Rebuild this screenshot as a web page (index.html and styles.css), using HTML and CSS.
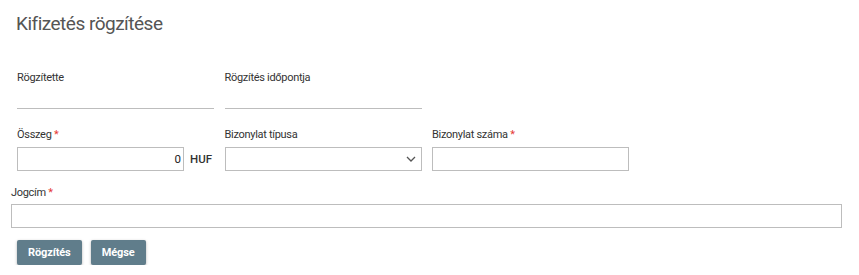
FILE: index.html
```html
<!DOCTYPE html>
<html lang="hu">
<head>
<meta charset="utf-8">
<title>Kifizetés rögzítése</title>
<link rel="stylesheet" href="styles.css">
</head>
<body>
<div class="page">
  <h1 class="title">Kifizetés rögzítése</h1>

  <div class="row row-info">
    <div class="field">
      <div class="label">Rögzítette</div>
      <div class="display"></div>
    </div>
    <div class="field">
      <div class="label">Rögzítés időpontja</div>
      <div class="display"></div>
    </div>
  </div>

  <div class="row row-inputs">
    <div class="field">
      <div class="label">Összeg <span class="req">*</span></div>
      <div class="amount">
        <div class="input amount-input">0</div>
        <span class="currency">HUF</span>
      </div>
    </div>
    <div class="field">
      <div class="label">Bizonylat típusa</div>
      <div class="input select">
        <svg class="chevron" width="10" height="6" viewBox="0 0 10 6"><path d="M1 1 L5 5 L9 1" fill="none" stroke="#555" stroke-width="1.3"/></svg>
      </div>
    </div>
    <div class="field">
      <div class="label">Bizonylat száma <span class="req">*</span></div>
      <div class="input"></div>
    </div>
  </div>

  <div class="wide-field">
    <div class="label">Jogcím <span class="req">*</span></div>
    <div class="input wide-input"></div>
  </div>

  <div class="actions">
    <button class="btn">Rögzítés</button>
    <button class="btn">Mégse</button>
  </div>
</div>
</body>
</html>
```

FILE: styles.css
```css
* { box-sizing: border-box; }
body {
  margin: 0;
  font-family: Roboto, "Liberation Sans", sans-serif;
  color: #333;
  background: #fff;
}
.page {
  padding: 12px 0 0 11px;
}
.title {
  margin: 0 0 0 5px;
  font-size: 19px;
  line-height: 24px;
  font-weight: 400;
  letter-spacing: -0.5px;
  color: #555;
}
.row {
  display: grid;
  grid-template-columns: 197px 197px 197px;
  column-gap: 10.5px;
  margin-left: 6px;
}
.row-info { margin-top: 35px; }
.row-inputs { margin-top: 19px; }
.label {
  font-size: 11px;
  line-height: 14px;
  letter-spacing: -0.3px;
  color: #333;
}
.req { color: #e53935; }
.display {
  height: 24px;
  border-bottom: 1px solid #bdbdbd;
}
.row-inputs .label { margin-bottom: 5px; }
.input {
  height: 24px;
  border: 1px solid #bdbdbd;
  background: #fff;
  font-size: 11.5px;
  line-height: 22px;
}
.amount {
  display: flex;
  align-items: center;
}
.amount-input {
  width: 167px;
  text-align: right;
  padding-right: 2px;
  color: #222;
}
.currency {
  margin-left: 6px;
  font-size: 11.5px;
  font-weight: 500;
  color: #333;
}
.select {
  display: flex;
  align-items: center;
  justify-content: flex-end;
  padding-right: 5px;
}
.chevron { display: block; }
.wide-field { margin-top: 15px; }
.wide-field .label { margin-bottom: 4px; }
.wide-input { width: 831px; }
.actions {
  display: flex;
  gap: 9px;
  margin: 12px 0 0 6px;
}
.btn {
  height: 25px;
  padding: 0 11px;
  border: none;
  border-radius: 2px;
  background: #607d8b;
  color: #fff;
  font-family: Roboto, "Liberation Sans", sans-serif;
  font-size: 11px;
  font-weight: 700;
  letter-spacing: -0.1px;
  box-shadow: 0 1px 3px rgba(0,0,0,0.3);
  cursor: pointer;
}
```
